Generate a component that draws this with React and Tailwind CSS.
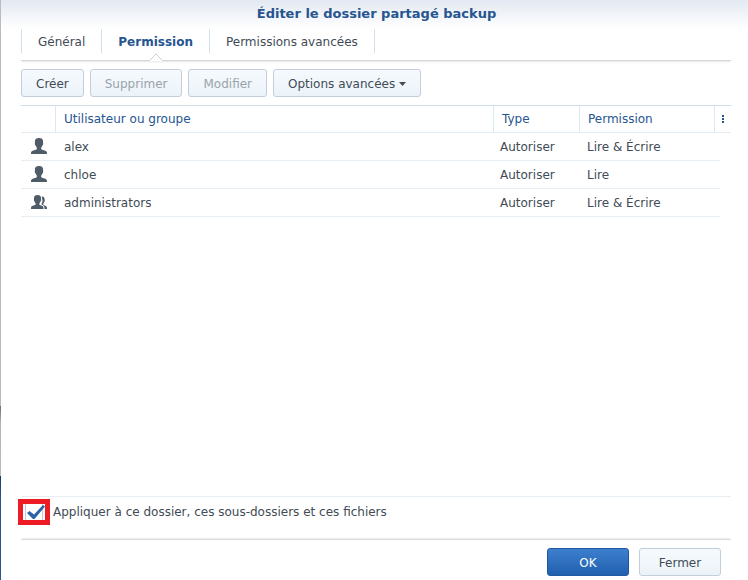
import { useState } from "react";

const TABS = [
  { id: "general", label: "Général" },
  { id: "permission", label: "Permission" },
  { id: "advanced", label: "Permissions avancées" },
];

const ROWS = [
  { name: "alex", group: false, type: "Autoriser", permission: "Lire & Écrire" },
  { name: "chloe", group: false, type: "Autoriser", permission: "Lire" },
  { name: "administrators", group: true, type: "Autoriser", permission: "Lire & Écrire" },
];

function UserIcon() {
  return (
    <svg width="16" height="16" viewBox="0 0 16 16" fill="#4f5b67" aria-hidden="true">
      <path d="M8 0C5.400 0 3.900 1.200 3.900 3.400V5.200C3.600 5.600 3.900 7 4.500 7.300C4.800 8.400 5.200 9 5.800 9.600V11.200C5 11.700 3.500 12 2.200 12.400C.7 12.900 0 13.500 0 15V16H16V15C16 13.500 15.300 12.900 13.800 12.400C12.500 12 11 11.700 10.200 11.200V9.600C10.800 9 11.200 8.400 11.500 7.300C12.100 7 12.400 5.600 12.100 5.200V3.400C12.100 1.200 10.600 0 8 0z" />
    </svg>
  );
}

function GroupIcon() {
  return (
    <svg width="16" height="16" viewBox="0 0 16 16" fill="#4f5b67" aria-hidden="true">
      <path d="M6.500 1C4.300 1 3 2.100 3 4V5.600C2.700 6 3 7.200 3.500 7.500C3.700 8.300 4.100 8.800 4.600 9.300V10.700C3.900 11.100 2.800 11.300 1.800 11.700C.6 12.100 0 12.700 0 14V15H12.500V14C12.500 12.700 12 12.100 10.900 11.700C9.900 11.300 9 11.100 8.400 10.700V9.300C8.900 8.800 9.300 8.300 9.500 7.500C10 7.200 10.300 6 10 5.600V4C10 2.100 8.700 1 6.500 1z" />
      <path d="M10.400 2.500C12.600 2.300 13.600 3.300 13.600 5V6.200C13.900 6.600 13.700 7.700 13.200 8C13 8.800 12.700 9.200 12.300 9.600V10.700C12.700 11.100 13.500 11.400 14.200 11.700C15.400 12.200 16 12.700 16 14V15H13.500C13.600 12.500 13.100 11.400 10.600 10.500V9.600C11 9.100 11.100 8.500 11.300 7.900C11.600 7.200 11.600 6.200 11.200 5.500C11.200 4.300 11.100 3.300 10.400 2.500z" />
    </svg>
  );
}

const BUTTON =
  "h-7 px-3.5 pt-0.5 rounded-[3px] border border-[#c3cedb] bg-linear-to-b from-[#f6faff] to-[#ecf3f8] text-[#414b55] disabled:text-[#9aa3ac]";

function Tabs({ active, onChange }) {
  return (
    <nav className="h-8 flex items-start border-b border-[#d5d5d5] shadow-[0_2px_2px_-1px_#e6e6e6]">
      {TABS.map((tab) => (
        <button
          key={tab.id}
          type="button"
          onClick={() => onChange(tab.id)}
          className={
            tab.id === active
              ? "relative h-6 px-4 pt-0.5 border-r border-[#d3dfea] font-bold text-[#26558f]"
              : "relative h-6 px-4 pt-0.5 border-r border-[#d3dfea] first:border-l text-[#414b55]"
          }
        >
          {tab.label}
          {tab.id === active && (
            <svg
              className="absolute left-1/2 top-6 -translate-x-1/2"
              width="14"
              height="8"
              viewBox="0 0 14 8"
              aria-hidden="true"
            >
              <path d="M0 8L0.500 7.500L7 1L13.500 7.500L14 8z" fill="#fff" />
              <path d="M0.500 7.500L7 1L13.500 7.500" fill="none" stroke="#cfcfcf" />
            </svg>
          )}
        </button>
      ))}
    </nav>
  );
}

function PermissionTable() {
  return (
    <table className="w-full table-fixed border-separate border-spacing-0 text-left">
      <colgroup>
        <col className="w-[35px]" />
        <col />
        <col className="w-[86px]" />
        <col className="w-[135px]" />
        <col className="w-4" />
      </colgroup>
      <thead>
        <tr className="h-7 text-[#26558f] *:border-t *:border-b *:border-t-[#cddcea] *:border-b-[#e3ecf3] *:font-normal">
          <th className="border-r border-r-[#dce8f2]" />
          <th className="border-r border-r-[#dce8f2] pl-2">Utilisateur ou groupe</th>
          <th className="border-r border-r-[#dce8f2] pl-2">Type</th>
          <th className="border-r border-r-[#dce8f2] pl-2">Permission</th>
          <th className="pl-[7px]">
            <button type="button" aria-label="Colonnes" className="flex flex-col gap-px">
              <span className="size-0.5 bg-[#26558f]" />
              <span className="size-0.5 bg-[#26558f]" />
              <span className="size-0.5 bg-[#26558f]" />
            </button>
          </th>
        </tr>
      </thead>
      <tbody className="text-[#414b55]">
        {ROWS.map((row) => (
          <tr key={row.name} className="h-7">
            <td className="border-b border-[#e6eef4] pl-2.5 pb-0.5">
              {row.group ? <GroupIcon /> : <UserIcon />}
            </td>
            <td className="border-b border-[#e6eef4] pl-2">{row.name}</td>
            <td className="border-b border-[#e6eef4] pl-1.5">{row.type}</td>
            <td className="border-b border-[#e6eef4] pl-[7px]">{row.permission}</td>
            <td>
              <div className="h-7 w-[5px] border-b border-[#e6eef4]" />
            </td>
          </tr>
        ))}
      </tbody>
    </table>
  );
}

function ApplyOption({ checked, onChange }) {
  return (
    <div className="-ml-[3px] h-[42px] pt-0.5 flex items-start gap-[3px]">
      <span className="relative flex justify-center w-8 h-[26px] border-5 border-[#ed1c24]">
        <input
          id="apply"
          type="checkbox"
          checked={checked}
          onChange={(e) => onChange(e.target.checked)}
          className="appearance-none w-[18px] h-4 border-x border-[#c3c9d6] bg-white"
        />
        {checked && (
          <svg
            className="absolute left-1 top-px pointer-events-none"
            width="18"
            height="14"
            viewBox="0 0 18 14"
            fill="#2b62a8"
            aria-hidden="true"
          >
            <path d="M0 8L2.500 6L7 9.500L16 0L18 1.500L7.500 14L6 14z" />
          </svg>
        )}
      </span>
      <label htmlFor="apply" className="leading-[26px] text-[#414b55]">
        Appliquer à ce dossier, ces sous-dossiers et ces fichiers
      </label>
    </div>
  );
}

export default function App() {
  const [tab, setTab] = useState("permission");
  const [applyAll, setApplyAll] = useState(true);

  return (
    <div className="min-h-screen flex bg-white text-[12px] leading-4 font-['DejaVu_Sans',Verdana,sans-serif]">
      {/* Desktop edge visible behind the window */}
      <div className="w-px bg-[linear-gradient(#bcbcbc_70%,#6e6e6e_70%,#b4b4b4_73%,#bcbcbc_82%,#1c3a66_82%,#2c5490_86%)]" />

      <div className="flex-1 min-w-0 flex flex-col">
        <header className="h-[29px] pt-1.5 pl-1 bg-linear-to-b from-[#e3e9f2] to-white text-center">
          <h1 className="text-[13px] font-bold text-[#26558f]">Éditer le dossier partagé backup</h1>
        </header>

        <main className="flex-1 flex flex-col pl-5 pr-[17px]">
          <Tabs active={tab} onChange={setTab} />

          <div className="flex gap-1.5 py-2">
            <button type="button" className={BUTTON}>Créer</button>
            <button type="button" className={BUTTON} disabled>Supprimer</button>
            <button type="button" className={BUTTON} disabled>Modifier</button>
            <button type="button" className={`${BUTTON} flex items-center gap-1`}>
              Options avancées
              <svg width="7" height="4" viewBox="0 0 7 4" fill="#414b55" aria-hidden="true">
                <path d="M0 0h7L3.500 4z" />
              </svg>
            </button>
          </div>

          <div className="flex-1 border-b border-[#e6eef4]">
            <PermissionTable />
          </div>

          <ApplyOption checked={applyAll} onChange={setApplyAll} />

          <footer className="flex justify-end gap-2.5 pt-2 pb-1 pr-2.5 border-t border-[#d9d9d9] shadow-[0_-2px_2px_-1px_#ebebeb]">
            <button
              type="button"
              className="w-[82px] h-7 pt-0.5 rounded-[3px] border border-[#1f57a0] bg-linear-to-b from-[#3d7fcf] to-[#2060ae] text-white"
            >
              OK
            </button>
            <button type="button" className={`${BUTTON} w-[82px]`}>
              Fermer
            </button>
          </footer>
        </main>
      </div>
    </div>
  );
}
